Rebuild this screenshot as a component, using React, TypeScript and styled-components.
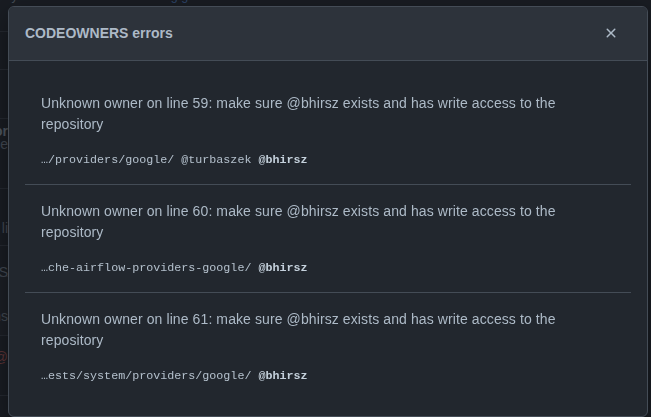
import React from 'react';
import styled, { createGlobalStyle } from 'styled-components';

const GlobalStyle = createGlobalStyle`
  html, body {
    margin: 0;
    padding: 0;
    background: #1c2026;
    overflow: hidden;
  }
  body {
    font-family: "Liberation Sans", Arial, sans-serif;
  }
`;

const Page = styled.div`
  width: 651px;
  height: 417px;
  overflow: hidden;
  background: #1c2026;
  color: #59626c;
  font-size: 14px;
`;

const TopLine = styled.div`
  height: 6px;
  margin: -14px 0 0 -12px;
  padding-bottom: 14px;
  font-size: 12.5px;
  line-height: 20px;
  white-space: nowrap;
  color: #4f5862;
`;

const FaintLink = styled.span`
  color: #34507a;
`;

const SideList = styled.div`
  display: flex;
  flex-direction: column;
  width: 40px;
  margin-left: -32px;
`;

const SideRow = styled.div<{ $h: number; $pad?: number; $tone?: string }>`
  box-sizing: border-box;
  height: ${p => p.$h}px;
  padding-top: ${p => p.$pad ?? 0}px;
  border-bottom: 1px solid #2a2f36;
  background: ${p => p.$tone || 'transparent'};
  display: flex;
  flex-direction: column;
  align-items: flex-end;
  gap: 1px;
  font-size: 14px;
  line-height: 12px;
  color: #4b535d;
`;

const Strong = styled.span`
  font-weight: bold;
  color: #59626c;
`;

const Red = styled.span`
  color: #6a3b3d;
`;

const Overlay = styled.div`
  position: fixed;
  inset: 0;
  background: rgba(12, 14, 18, 0.15);
`;

const Dialog = styled.div`
  position: absolute;
  left: 8px;
  top: 6px;
  width: 640px;
  height: 411px;
  box-sizing: border-box;
  border: 1px solid #444c56;
  border-radius: 6px;
  background: #22272e;
  overflow: hidden;
  display: flex;
  flex-direction: column;
  box-shadow: 0 8px 24px rgba(0, 0, 0, 0.4);
`;

const Header = styled.div`
  height: 54px;
  flex-shrink: 0;
  display: flex;
  align-items: center;
  justify-content: space-between;
  padding: 0 20px 1px 16px;
  box-sizing: border-box;
  background: #2d333b;
  border-bottom: 1px solid #444c56;
`;

const Title = styled.h1`
  margin: 0;
  font-size: 14px;
  font-weight: bold;
  color: #adbac7;
`;

const CloseButton = styled.button`
  width: 32px;
  height: 32px;
  display: flex;
  align-items: center;
  justify-content: center;
  padding: 0;
  border: 0;
  background: transparent;
  color: #adbac7;
  cursor: pointer;
`;

const Body = styled.div`
  padding: 16px;
  overflow: hidden;
`;

const ErrorItem = styled.div<{ $first?: boolean }>`
  padding: 16px;
  border-top: ${p => (p.$first ? 'none' : '1px solid #444c56')};
`;

const Message = styled.p`
  max-width: 545px;
  margin: 0 0 18px;
  font-size: 14px;
  line-height: 21px;
  letter-spacing: 0.1px;
  color: #adbac7;
`;

const Path = styled.div`
  font-family: "Liberation Mono", "DejaVu Sans Mono", monospace;
  font-size: 11.7px;
  line-height: 15px;
  color: #b4c0cc;
  white-space: nowrap;
`;

const Owner = styled.b`
  color: #c5d1dc;
  font-weight: bold;
`;

const errors = [
  {
    line: 59,
    path: '…/providers/google/',
    owners: ['@turbaszek'],
  },
  {
    line: 60,
    path: '…che-airflow-providers-google/',
    owners: [],
  },
  {
    line: 61,
    path: '…ests/system/providers/google/',
    owners: [],
  },
];

const XIcon = () => (
  <svg width="16" height="16" viewBox="0 0 16 16" fill="currentColor">
    <path d="M3.72 3.72a.75.75 0 0 1 1.06 0L8 6.94l3.22-3.22a.749.749 0 0 1 1.275.326.749.749 0 0 1-.215.734L9.06 8l3.22 3.22a.749.749 0 0 1-.326 1.275.749.749 0 0 1-.734-.215L8 9.06l-3.22 3.22a.751.751 0 0 1-1.042-.018.751.751 0 0 1-.018-1.042L6.94 8 3.72 4.78a.75.75 0 0 1 0-1.06Z" />
  </svg>
);

const App: React.FC = () => {
  return (
    <>
      <GlobalStyle />
      <Page>
        <TopLine>
          sitory should follow its <FaintLink>contributing guidelines</FaintLink> and{' '}
          <FaintLink>code of conduct.</FaintLink>
        </TopLine>
        <SideList>
          <SideRow $h={26} />
          <SideRow $h={38} />
          <SideRow $h={49} />
          <SideRow $h={70} $pad={6}>
            <Strong>or</Strong>
            <span>e</span>
          </SideRow>
          <SideRow $h={57} $pad={33}>li</SideRow>
          <SideRow $h={31} $pad={20}>RS</SideRow>
          <SideRow $h={59} $pad={33} $tone="#1f2329">ns</SideRow>
          <SideRow $h={60} $pad={15}>
            <Red>@</Red>
          </SideRow>
        </SideList>
      </Page>
      <Overlay>
        <Dialog role="dialog">
          <Header>
            <Title>CODEOWNERS errors</Title>
            <CloseButton aria-label="Close">
              <XIcon />
            </CloseButton>
          </Header>
          <Body>
            {errors.map((err, i) => (
              <ErrorItem key={err.line} $first={i === 0}>
                <Message>
                  {`Unknown owner on line ${err.line}: make sure @bhirsz exists and has write access to the repository`}
                </Message>
                <Path>
                  {`${err.path} ${err.owners.map(o => `${o} `).join('')}`}
                  <Owner>@bhirsz</Owner>
                </Path>
              </ErrorItem>
            ))}
          </Body>
        </Dialog>
      </Overlay>
    </>
  );
};

export default App;
